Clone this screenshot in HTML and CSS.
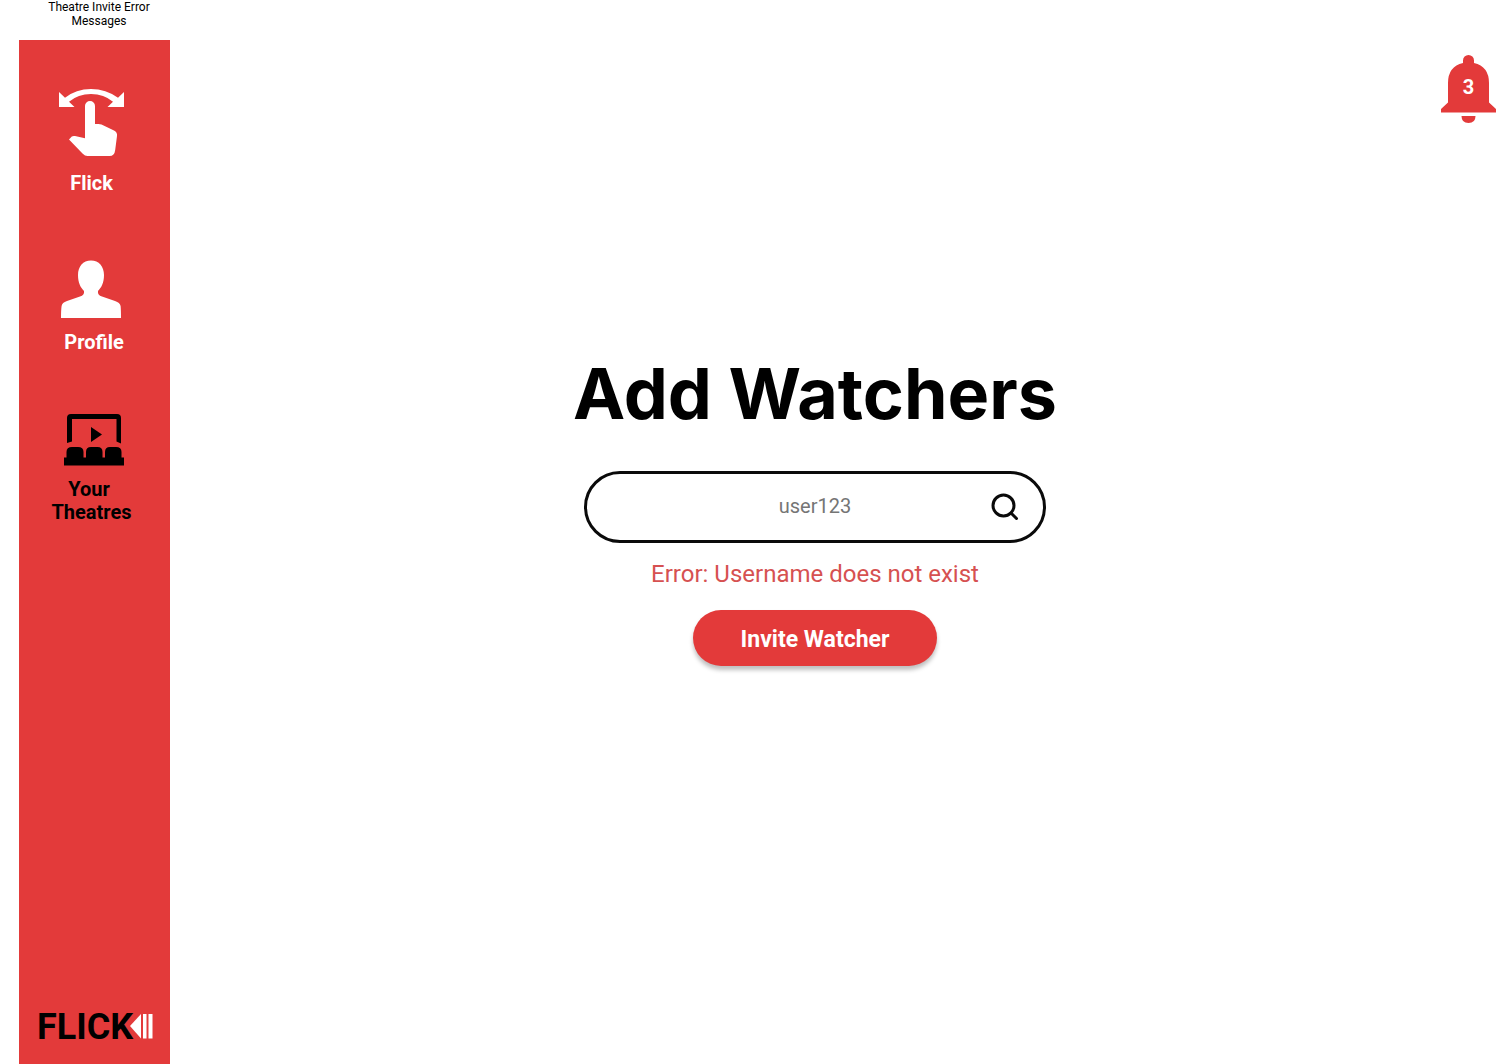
FILE: index.html
```html
<!DOCTYPE html>
<html lang="en">
<head>
<meta charset="utf-8">
<meta name="viewport" content="width=device-width, initial-scale=1">
<title>Theatre Invite Error Messages</title>
<link rel="stylesheet" href="styles.css">
</head>
<body>
<div class="page">
  <p class="caption">Theatre Invite Error Messages</p>

  <nav class="sidebar">
    <div class="nav-list">
      <a class="nav-item" href="#flick">
        <svg class="icon" width="67" height="72" viewBox="0 0 67 72" fill="currentColor" aria-hidden="true">
          <path d="M1 4V19H16.500L11 13.800Q20 6 33 6Q46 6 55 13.800L49.500 19H66V4L60 9.800Q48 1 33 1Q18 1 7 9.800Z"/>
          <path d="M27 18a5 5 0 0 1 10 0V36H40.500Q42 36 43.500 36.600L56 42.600Q59.500 44.300 59 48L57.200 62Q56.500 68 51.500 68H29.500Q27 68 24.500 65.500L11 51.500L13.800 48.600Q15 47.600 17 48L27 50.300Z"/>
        </svg>
        <span class="label">Flick</span>
      </a>
      <a class="nav-item" href="#profile">
        <svg class="icon" width="67" height="64" viewBox="0 -5 67 64" fill="currentColor" aria-hidden="true">
          <path d="M33 0.500C25 0.500 20 6.500 20 15C20 22.500 22.500 27.500 26 31C26.500 34 25 35.500 22 36.500L9 41Q4 42.500 3.600 46Q3 50 3 58H63Q63 50 62.600 46Q62 42.500 57 41L44 36.500C41 35.500 39.500 34 40 31C43.500 27.500 46 22.500 46 15C46 6.500 41 0.500 33 0.500Z"/>
        </svg>
        <span class="label"> Profile</span>
      </a>
      <a class="nav-item current" href="#theatres" aria-current="page">
        <svg class="icon" width="67" height="52" viewBox="0 0 67 52" fill="currentColor" aria-hidden="true">
          <path d="M9 29V4Q9 0 13 0H59Q63 0 63 4V29.500L58.500 27.500V5H14V27.500Z"/>
          <path d="M33 13L44 20.500L33 28Z"/>
          <path d="M6 51.500V43.500H8.500V38Q8.500 33 14 33H20Q25.500 33 25.500 38V43.500H28V38Q28 33 33 33H39.500Q44.500 33 44.500 38V43.500H47V38Q47 33 52 33H58Q63.500 33 63.500 38V43.500H66V51.500Z"/>
        </svg>
        <span class="label">Your 
Theatres</span>
      </a>
    </div>
    <div class="logo">
      <span>FLICK</span>
      <svg class="logo-mark" width="23" height="26" viewBox="0 0 23 26" fill="#fff" aria-hidden="true">
        <path d="M0 12L11 0V24.500Z"/>
        <path d="M13 0H16.500V24.500H13ZM18.500 0H22.500V24.500H18.500Z"/>
      </svg>
    </div>
  </nav>

  <main class="content">
    <h1 class="title">Add Watchers</h1>
    <form class="invite">
      <div class="search">
        <input class="search-input" type="text" placeholder="user123" aria-label="Username" aria-describedby="invite-error">
        <button class="search-button" type="button" aria-label="Search">
          <svg width="28" height="28" viewBox="0 0 28 28" fill="none" stroke="#0a0a0a" stroke-width="3" stroke-linecap="round" aria-hidden="true">
            <circle cx="12.500" cy="12.500" r="10.500"/>
            <path d="M20.500 20.500L25.500 25.500"/>
          </svg>
        </button>
      </div>
      <p class="error" id="invite-error">Error: Username does not exist</p>
      <button class="submit" type="submit">Invite Watcher</button>
    </form>
  </main>

  <button class="bell" type="button" aria-label="3 notifications">
    <svg width="55" height="68" viewBox="0 0 55 68" fill="currentColor" aria-hidden="true">
      <path d="M0 57.500V54L7 47.500V28Q7 11.500 22 8V5.500A5.500 5.500 0 0 1 33 5.500V8Q48 11.500 48 28V47.500L55 54V57.500Z"/>
      <path d="M20.500 61H34.500Q34.500 68 27.500 68T20.500 61Z"/>
    </svg>
    <span class="bell-count">3</span>
  </button>
</div>
</body>
</html>
```
FILE: styles.css
```css
* {
  box-sizing: border-box;
}

body {
  margin: 0;
  background: #fff;
  color: #000;
  font-family: Roboto, "Liberation Sans", sans-serif;
}

.page {
  display: grid;
  grid-template-columns: 151px 1fr auto;
  grid-template-rows: 40px 1fr;
  min-height: 100vh;
  padding: 0 16px 0 19px;
}

.caption {
  margin: 0;
  padding-left: 20px;
  width: 140px;
  font-size: 12px;
  line-height: 14px;
  text-align: center;
}

.sidebar {
  grid-row: 2;
  grid-column: 1;
  display: flex;
  flex-direction: column;
  justify-content: space-between;
  padding: 48px 0 19px;
  background: #e33a3a;
}

.nav-list {
  display: flex;
  flex-direction: column;
  gap: 60px;
  padding-right: 6px;
}

.nav-item {
  display: flex;
  flex-direction: column;
  align-items: center;
  gap: 12px;
  color: #fff;
  text-decoration: none;
}

.nav-item.current {
  color: #000;
}

.icon {
  display: block;
}

.label {
  font-size: 20px;
  font-weight: 700;
  line-height: 23px;
  text-align: center;
  white-space: pre;
}

.logo {
  display: flex;
  align-items: center;
  padding-left: 18px;
  font-size: 36px;
  font-weight: 700;
  line-height: 36px;
}

.logo-mark {
  margin-left: -3px;
}

.content {
  grid-row: 2;
  grid-column: 2;
  display: flex;
  flex-direction: column;
  align-items: center;
  padding: 310px 0 40px 19px;
}

.title {
  margin: 0;
  font-family: Inter, "Liberation Sans", sans-serif;
  font-size: 70px;
  font-weight: 700;
  line-height: 88px;
}

.invite {
  display: flex;
  flex-direction: column;
  align-items: center;
  width: 100%;
  max-width: 462px;
  margin-top: 33px;
}

.search {
  display: flex;
  align-items: center;
  width: 100%;
  height: 72px;
  padding: 0 24px;
  border: 3px solid #0a0a0a;
  border-radius: 36px;
}

.search-input {
  flex: 1;
  min-width: 0;
  padding: 0 0 2px 28px;
  border: 0;
  outline: 0;
  background: none;
  font: 20px/24px Roboto, "Liberation Sans", sans-serif;
  text-align: center;
}

.search-input::placeholder {
  color: #757575;
  opacity: 1;
}

.search-button {
  display: flex;
  padding: 0;
  border: 0;
  background: none;
}

.error {
  margin: 17px 0 22px;
  color: #d65151;
  font-size: 24px;
  line-height: 28px;
}

.submit {
  width: 244px;
  height: 56px;
  padding: 4px 0 0;
  border: 0;
  border-radius: 28px;
  background: #e33a3a;
  box-shadow: 0 4px 4px rgba(0, 0, 0, 0.25);
  color: #fff;
  font: 700 23px/28px Roboto, "Liberation Sans", sans-serif;
}

.bell {
  grid-row: 2;
  grid-column: 3;
  display: grid;
  align-self: start;
  margin-top: 15px;
  padding: 0;
  border: 0;
  background: none;
  color: #e33a3a;
}

.bell > * {
  grid-area: 1 / 1;
}

.bell-count {
  align-self: start;
  padding-top: 20px;
  color: #fff;
  font: 700 20px/24px Roboto, "Liberation Sans", sans-serif;
  text-align: center;
}
```
